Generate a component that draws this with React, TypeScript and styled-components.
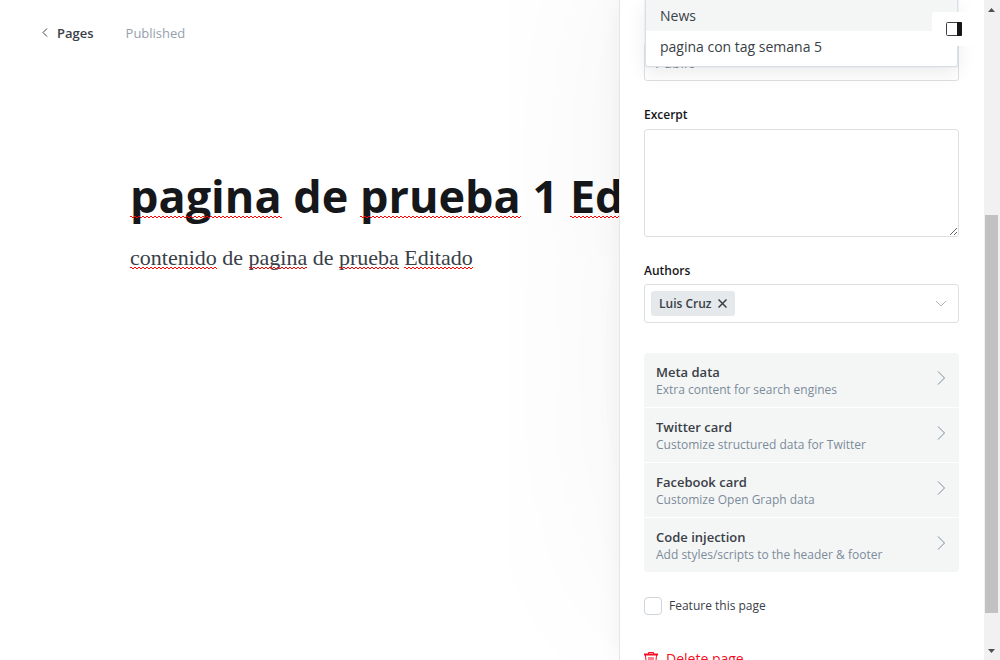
import React from 'react';
import styled, { createGlobalStyle, css } from 'styled-components';

const sans = "'Open Sans', 'Noto Sans', 'Liberation Sans', sans-serif";
const serif = "'Liberation Serif', 'DejaVu Serif', serif";

const GlobalStyle = createGlobalStyle`
  *, *::before, *::after { box-sizing: border-box; }
  body { margin: 0; background: #fff; font-family: ${sans}; color: #394047; overflow: hidden; }
  button, input, textarea, select { font: inherit; color: inherit; }
  button { padding: 0; border: 0; background: none; cursor: pointer; }
`;

const Shell = styled.div`
  position: relative;
  display: flex;
  height: 100vh;
  overflow: hidden;
`;

const Editor = styled.main`
  flex: 1;
  min-width: 0;
  overflow: hidden;
`;

const Header = styled.header`
  display: flex;
  align-items: center;
  gap: 32px;
  padding: 22px 40px;
  font-size: 13px;
  line-height: 22px;
`;

const BackLink = styled.a`
  display: flex;
  align-items: center;
  gap: 8px;
  color: #394047;
  font-weight: 600;
  text-decoration: none;
`;

const Status = styled.span`
  color: #95a1ad;
`;

const Article = styled.article`
  padding: 100px 0 0 130px;
  white-space: nowrap;
`;

const Title = styled.h1`
  margin: 0;
  color: #15171a;
  font-size: 45px;
  font-weight: 700;
  line-height: 60px;
`;

const Body = styled.p`
  margin: 16px 0 0;
  font-family: ${serif};
  font-size: 22px;
  line-height: 32px;
`;

const Misspelt = styled.span<{ $bottom: number }>`
  position: relative;
  display: inline-block;
  &::after {
    content: '';
    position: absolute;
    left: 0;
    right: 0;
    bottom: ${p => p.$bottom}px;
    height: 2px;
    background:
      linear-gradient(90deg, #f00 2px, transparent 2px) 0 0 / 4px 1px repeat-x,
      linear-gradient(90deg, transparent 2px, #f00 2px) 0 1px / 4px 1px repeat-x;
  }
`;

const Panel = styled.aside`
  position: relative;
  display: flex;
  flex-direction: column;
  flex: 0 0 365px;
  padding: 43px 25px 0 24px;
  background: #fff;
  border-left: 1px solid #e5e5e5;
  box-shadow: 0 0 24px rgba(0, 0, 0, 0.05), 0 -60px 190px rgba(0, 0, 0, 0.05);
`;

const fieldBox = css`
  display: block;
  width: 100%;
  border: 1px solid #dddfe1;
  border-radius: 3px;
  background: #fff;
`;

const AccessSelect = styled.select`
  ${fieldBox}
  flex: none;
  height: 38px;
  padding: 0 10px;
  appearance: none;
  font-size: 14px;
`;

const Label = styled.label`
  margin-top: 24px;
  color: #15171a;
  font-size: 12px;
  font-weight: 600;
  line-height: 20px;
`;

const Excerpt = styled.textarea`
  ${fieldBox}
  flex: none;
  height: 108px;
  margin: 4px 0 0;
  resize: vertical;
  outline: 0;
`;

const TokenField = styled.div`
  ${fieldBox}
  display: flex;
  align-items: center;
  flex: none;
  height: 39px;
  margin-top: 3px;
  padding: 0 12px 0 6px;
`;

const Token = styled.button`
  display: flex;
  align-items: center;
  gap: 6px;
  height: 25px;
  padding: 0 8px;
  border-radius: 3px;
  background: #e5e9ec;
  color: #394047;
  font-size: 12px;
  font-weight: 600;
`;

const TokenInput = styled.input`
  flex: 1;
  min-width: 0;
  border: 0;
  outline: 0;
  background: none;
`;

const Groups = styled.nav`
  display: flex;
  flex-direction: column;
  flex: none;
  gap: 1px;
  margin-top: 30px;
  border-radius: 4px;
  overflow: hidden;
`;

const GroupButton = styled.button`
  display: flex;
  align-items: center;
  justify-content: space-between;
  height: 54px;
  padding: 2px 12px 0;
  background: #f4f6f6;
  text-align: left;
  svg { margin-bottom: 6px; }
`;

const GroupName = styled.span`
  display: block;
  color: #394047;
  font-size: 13px;
  font-weight: 600;
  line-height: 18px;
`;

const GroupNote = styled.span`
  display: block;
  color: #7c8b9a;
  font-size: 12px;
  line-height: 18px;
`;

const FeatureLabel = styled.label`
  display: flex;
  align-items: center;
  gap: 7px;
  margin-top: 24px;
  font-size: 12px;
  line-height: 20px;
`;

const Checkbox = styled.input`
  width: 18px;
  height: 18px;
  margin: 0;
  appearance: none;
  border: 1px solid #cfd5da;
  border-radius: 4px;
  background: #fff;
`;

const DeleteButton = styled.button`
  display: flex;
  align-items: center;
  align-self: flex-start;
  gap: 8px;
  margin-top: 33px;
  color: #f50b23;
  font-size: 14px;
  line-height: 20px;
`;

const Suggestions = styled.ul`
  position: absolute;
  top: 0;
  left: 25px;
  right: 26px;
  margin: 0;
  padding: 0 0 4px;
  list-style: none;
  background: #fff;
  border: 1px solid #dae0e5;
  border-top: 0;
  border-radius: 0 0 3px 3px;
  box-shadow: 0 0 0 1px rgba(218, 224, 229, 0.4), 0 6px 20px rgba(0, 0, 0, 0.08);
`;

const Suggestion = styled.li<{ $active?: boolean }>`
  height: 31px;
  padding: 0 14px;
  background: ${p => (p.$active ? '#f4f6f6' : '#fff')};
  font-size: 14px;
  line-height: 32px;
`;

const ToggleButton = styled.button`
  position: absolute;
  top: 12px;
  right: 0;
  display: flex;
  align-items: center;
  width: 52px;
  height: 34px;
  padding-left: 14px;
  border-radius: 3px;
  background: #fff;
`;

const ScrollTrack = styled.div`
  position: relative;
  display: flex;
  flex-direction: column;
  align-items: center;
  flex: 0 0 16px;
  padding: 8px 2px 7px 1px;
  background: #f1f1f1;
`;

const ScrollSpace = styled.div<{ $grow: number }>`
  flex: ${p => p.$grow} 1 0;
`;

const ScrollThumb = styled.div`
  flex: 398 1 0;
  width: 13px;
  background: #c1c1c1;
`;

const groups = [
  ['Meta data', 'Extra content for search engines'],
  ['Twitter card', 'Customize structured data for Twitter'],
  ['Facebook card', 'Customize Open Graph data'],
  ['Code injection', 'Add styles/scripts to the header & footer'],
];

const Chevron = ({ w, h, d, color }: { w: number; h: number; d: string; color: string }) => (
  <svg width={w} height={h} viewBox={`0 0 ${w} ${h}`} fill="none" stroke={color} aria-hidden="true">
    <path d={d} />
  </svg>
);

export default function App() {
  return (
    <>
      <GlobalStyle />
      <Shell>
        <Editor>
          <Header>
            <BackLink href="#pages">
              <Chevron w={9} h={12} d="M7 1.500L3 5.500l4 4" color="#394047" />
              Pages
            </BackLink>
            <Status>Published</Status>
          </Header>
          <Article>
            <Title>
              <Misspelt $bottom={8}>pagina</Misspelt> de <Misspelt $bottom={8}>prueba</Misspelt> 1{' '}
              <Misspelt $bottom={8}>Editado</Misspelt>
            </Title>
            <Body>
              <Misspelt $bottom={5}>contenido</Misspelt> de <Misspelt $bottom={5}>pagina</Misspelt> de{' '}
              <Misspelt $bottom={5}>prueba</Misspelt> <Misspelt $bottom={5}>Editado</Misspelt>
            </Body>
          </Article>
        </Editor>
        <Panel>
          <AccessSelect aria-label="Page access" defaultValue="Public">
            <option>Public</option>
          </AccessSelect>
          <Label htmlFor="excerpt">Excerpt</Label>
          <Excerpt id="excerpt" />
          <Label htmlFor="authors">Authors</Label>
          <TokenField>
            <Token type="button">
              Luis Cruz
              <svg width="9" height="9" viewBox="0 0 9 9" stroke="#394047" strokeWidth="1.500" aria-hidden="true">
                <path d="M.5.5l8 8M8.500.5l-8 8" />
              </svg>
            </Token>
            <TokenInput id="authors" />
            <Chevron w={10} h={7} d="M0 1l5 5 5-5" color="#aeb7c1" />
          </TokenField>
          <Groups>
            {groups.map(([name, note]) => (
              <GroupButton type="button" key={name}>
                <span>
                  <GroupName>{name}</GroupName>
                  <GroupNote>{note}</GroupNote>
                </span>
                <Chevron w={11} h={14} d="M2 .5L8.500 7 2 13.500" color="#7c8b9a" />
              </GroupButton>
            ))}
          </Groups>
          <FeatureLabel>
            <Checkbox type="checkbox" />
            Feature this page
          </FeatureLabel>
          <DeleteButton type="button">
            <svg width="14" height="15" viewBox="0 0 14 15" fill="none" stroke="#f50b23" aria-hidden="true">
              <path d="M4.500 2V.5h5V2M1.500 3l1 11.500h9l1-11.500M5 5v7M7 5v7M9 5v7" />
              <path d="M0 2.500h14" strokeWidth="2" />
            </svg>
            Delete page
          </DeleteButton>
          <Suggestions>
            <Suggestion $active>News</Suggestion>
            <Suggestion>pagina con tag semana 5</Suggestion>
          </Suggestions>
          <ToggleButton type="button" aria-label="Settings">
            <svg width="16" height="14" viewBox="0 0 16 14" aria-hidden="true">
              <rect x=".5" y=".5" width="15" height="13" rx="1" fill="#fff" stroke="#3c3e41" />
              <path d="M11 0h4a1 1 0 0 1 1 1v12a1 1 0 0 1-1 1h-4z" fill="#15171a" />
            </svg>
          </ToggleButton>
        </Panel>
        <ScrollTrack>
          <svg width="7" height="4" viewBox="0 0 7 4" fill="#505050" aria-hidden="true"><path d="M0 4l3.500-4L7 4z" /></svg>
          <ScrollSpace $grow={203} />
          <ScrollThumb />
          <ScrollSpace $grow={36} />
          <svg width="7" height="4" viewBox="0 0 7 4" fill="#505050" aria-hidden="true"><path d="M0 0l3.500 4L7 0z" /></svg>
        </ScrollTrack>
      </Shell>
    </>
  );
}
